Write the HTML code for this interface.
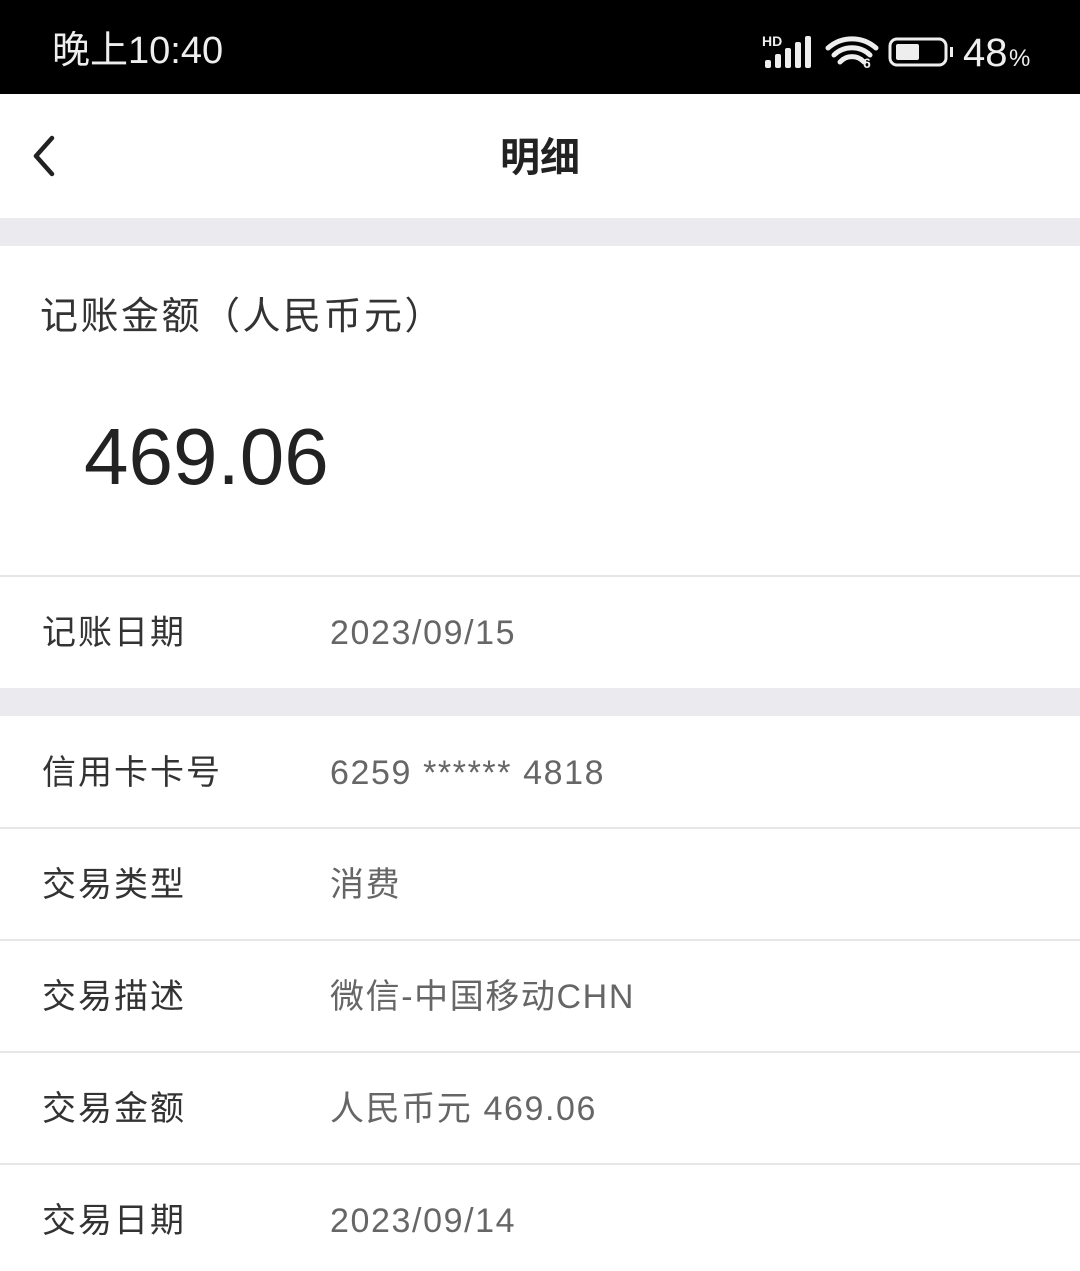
<!DOCTYPE html><html><head><meta charset="utf-8"><style>
body{margin:0;width:1080px;height:1271px;overflow:hidden;background:#fff;font-family:"Liberation Sans","Noto Sans CJK SC",sans-serif;position:relative}
.a{position:absolute}
.sb{left:0;top:0;width:1080px;height:94px;background:#000;color:#fff}
.band{left:0;width:1080px;height:28px;background:#ebebef}
.line{left:0;width:1080px;height:2px;background:#e6e6e6}
.lab{left:42px;font-size:34px;color:#333;line-height:40px;letter-spacing:2px}
.val{left:330px;font-size:34px;color:#666;line-height:40px;letter-spacing:1.6px}
</style></head><body>
<div class="a sb">
<div class="a" style="left:52px;top:28px;font-size:38px;line-height:46px;color:#eee">晚上10:40</div>
<svg class="a" style="left:760px;top:30px" width="290" height="44" viewBox="0 0 290 44">
<text x="2" y="16" font-size="14" font-weight="bold" fill="#eee" font-family="Liberation Sans">HD</text>
<rect x="5" y="30" width="6" height="8" rx="2" fill="#eee"/><rect x="15" y="24" width="6" height="14" rx="2" fill="#eee"/><rect x="25" y="18" width="6" height="20" rx="2" fill="#eee"/><rect x="35" y="12" width="6" height="26" rx="2" fill="#eee"/><rect x="45" y="6" width="6" height="32" rx="2" fill="#eee"/>
<path d="M68 18a36 36 0 0 1 48 0M74 25a26 26 0 0 1 36 0M80 32a16 16 0 0 1 24 0" stroke="#eee" stroke-width="5" fill="none" stroke-linecap="round"/>
<text x="103" y="38" font-size="14" font-weight="bold" fill="#eee">6</text>
<rect x="130" y="9" width="56" height="26" rx="7" fill="none" stroke="#eee" stroke-width="3"/><rect x="136" y="14" width="23" height="16" rx="2" fill="#eee"/><rect x="190" y="17" width="3" height="10" fill="#eee"/>
<text x="203" y="36" font-size="40" fill="#eee" font-family="Liberation Sans">48</text><text x="249" y="36" font-size="24" fill="#eee">%</text>
</svg>
</div>
<svg class="a" style="left:28px;top:134px" width="40" height="44"><path d="M24 4L8 22l16 18" stroke="#222" stroke-width="4.5" fill="none" stroke-linecap="round" stroke-linejoin="round"/></svg>
<div class="a" style="left:0;width:1080px;top:134px;text-align:center;font-size:40px;font-weight:bold;color:#222;line-height:48px">明细</div>
<div class="a band" style="top:218px"></div>
<div class="a" style="left:40px;top:294px;font-size:38px;color:#333;line-height:46px;letter-spacing:2.5px">记账金额（人民币元）</div>
<div class="a" style="left:84px;top:412px;font-size:80px;color:#222;line-height:90px">469.06</div>
<div class="a line" style="top:575px"></div>
<div class="a lab" style="top:613px">记账日期</div><div class="a val" style="top:613px">2023/09/15</div>
<div class="a band" style="top:688px"></div>
<div class="a lab" style="top:753px">信用卡卡号</div><div class="a val" style="top:753px">6259 ****** 4818</div>
<div class="a line" style="top:827px"></div>
<div class="a lab" style="top:865px">交易类型</div><div class="a val" style="top:865px">消费</div>
<div class="a line" style="top:939px"></div>
<div class="a lab" style="top:977px">交易描述</div><div class="a val" style="top:977px">微信-中国移动CHN</div>
<div class="a line" style="top:1051px"></div>
<div class="a lab" style="top:1089px">交易金额</div><div class="a val" style="top:1089px">人民币元 469.06</div>
<div class="a line" style="top:1163px"></div>
<div class="a lab" style="top:1201px">交易日期</div><div class="a val" style="top:1201px">2023/09/14</div>
</body></html>
